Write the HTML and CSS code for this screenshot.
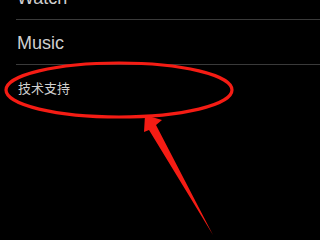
FILE: index.html
```html
<!DOCTYPE html>
<html>
<head>
<meta charset="utf-8">
<link rel="stylesheet" href="styles.css">
</head>
<body>
<div class="screen">
  <ul class="list">
    <li class="item">Watch</li>
    <li class="item">Music</li>
    <li class="item cjk">技术支持</li>
  </ul>
  <svg class="mark" width="320" height="240" viewBox="0 0 320 240">
    <ellipse cx="119" cy="90" rx="113" ry="27" fill="none" stroke="#f51c14" stroke-width="3.2"/>
    <polygon points="145,115 162,120 156,125 213,235 149,130 144,132" fill="#f51c14"/>
  </svg>
</div>
</body>
</html>
```
FILE: styles.css
```css
html, body {
  margin: 0;
  padding: 0;
  background: #000;
}
.screen {
  position: relative;
  width: 320px;
  height: 240px;
  overflow: hidden;
  background: #000;
}
.list {
  list-style: none;
  margin: -25px 0 0 16px;
  padding: 0;
}
.item {
  height: 44px;
  line-height: 46px;
  border-bottom: 1px solid #3a3a3a;
  color: #cfcfcf;
  font-family: "Liberation Sans", Arial, sans-serif;
  font-size: 18px;
  padding-left: 1px;
}
.item.cjk {
  border-bottom: none;
  font-family: "Noto Sans CJK SC", sans-serif;
  font-size: 13px;
  line-height: 46px;
  color: #d0d0d0;
  padding-left: 2px;
}
.mark {
  position: absolute;
  left: 0;
  top: 0;
}
```
